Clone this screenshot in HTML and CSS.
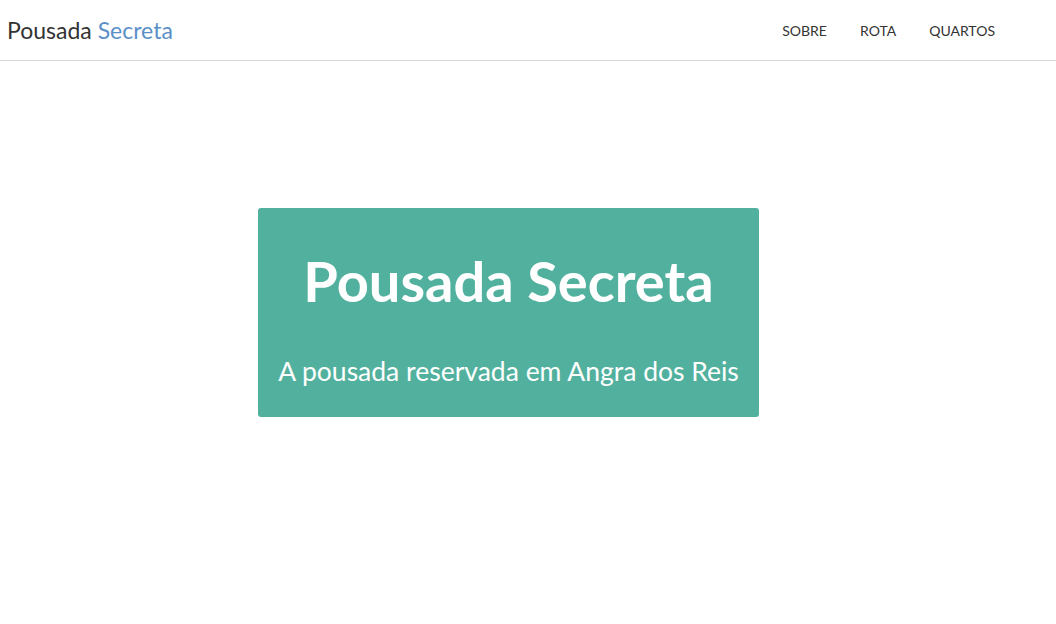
FILE: index.html
```html
<!DOCTYPE html>
<html lang="pt">
<head>
<meta charset="utf-8">
<title>Pousada Secreta</title>
<link rel="stylesheet" href="styles.css">
</head>
<body>
<nav class="navbar">
  <a class="brand" href="#">Pousada <span class="brand-accent">Secreta</span></a>
  <ul class="nav">
    <li><a href="#">SOBRE</a></li>
    <li><a href="#">ROTA</a></li>
    <li><a href="#">QUARTOS</a></li>
  </ul>
</nav>
<main class="hero">
  <div class="card">
    <h1 class="title">Pousada Secreta</h1>
    <p class="subtitle">A pousada reservada em Angra dos Reis</p>
  </div>
</main>
</body>
</html>
```
FILE: styles.css
```css
* { box-sizing: border-box; }
html, body { margin: 0; padding: 0; background: #fff; }
body { font-family: Lato, "Open Sans", sans-serif; color: #333; }
.navbar {
  height: 61px;
  border-bottom: 1px solid #d8d8d8;
  display: flex;
  align-items: center;
  justify-content: space-between;
  padding: 0 61px 0 7px;
}
.brand { font-size: 23px; color: #333; text-decoration: none; }
.brand-accent { color: #5b8fc7; }
.nav { list-style: none; margin: 0; padding: 0 0 2px; display: flex; gap: 33px; }
.nav a { font-size: 14px; color: #333; text-decoration: none; }
.hero { padding-top: 147px; padding-left: 258px; }
.card {
  width: 501px;
  height: 209px;
  background: #52b19e;
  border-radius: 3px;
  color: #fff;
  text-align: center;
  padding-top: 37px;
}
.title { margin: 0; font-size: 56px; font-weight: 700; line-height: 72px; }
.subtitle { margin: 36px 0 0; font-size: 26.5px; line-height: 36px; }
```
